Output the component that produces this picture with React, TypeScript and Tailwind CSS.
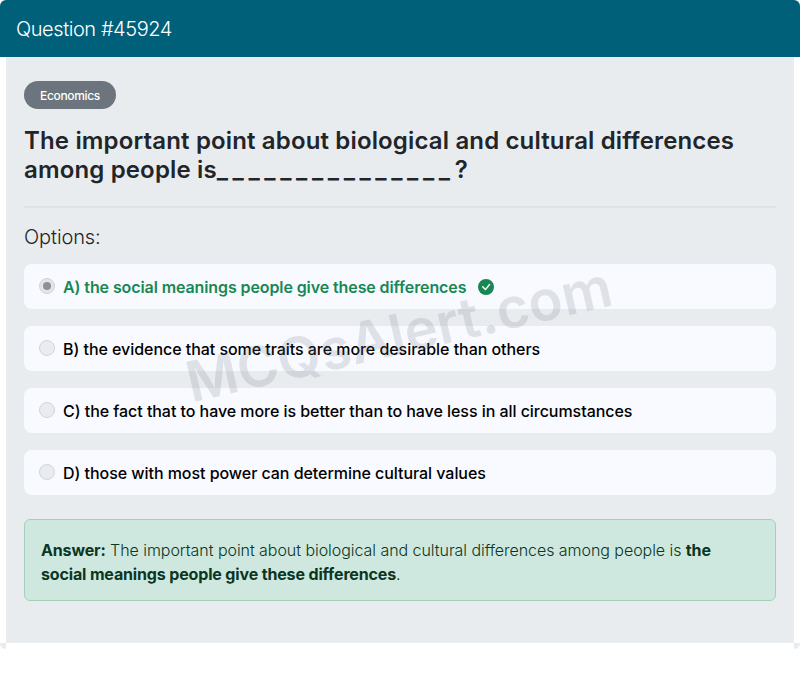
import React from 'react'

const options = [
  { label: 'A) the social meanings people give these differences', correct: true },
  { label: 'B) the evidence that some traits are more desirable than others', correct: false },
  { label: 'C) the fact that to have more is better than to have less in all circumstances', correct: false },
  { label: 'D) those with most power can determine cultural values', correct: false },
]

const App = () => {
  return (
    <div className="relative h-[674px] w-[800px] overflow-hidden bg-white font-['Inter',sans-serif]">
      <div className="rounded-t-[6px] bg-[#00607a] px-4 pt-[15px] pb-[13px] text-[20px] leading-[29px] font-light tracking-[-0.43px] text-white">
        Question #45924
      </div>

      <div className="mx-[6px] h-[586px] bg-[#e9ecef] px-[18px] pt-6">
        <span className="inline-block rounded-full bg-[#6c757d] px-4 pt-[7px] pb-[5px] text-xs leading-4 font-medium tracking-[-0.33px] text-white">
          Economics
        </span>
        <h2 className="mt-[17px] text-2xl leading-[29px] font-semibold tracking-[0.15px] text-[#212529]">
          The important point about biological and cultural differences among people is
          <span className="tracking-[4.6px]">_______________</span>?
        </h2>
        <hr className="mt-[22px] border-t-2 border-[#dee2e6]" />
        <p className="mt-[14px] text-xl leading-[30px] font-light tracking-[-0.1px] text-[#212529]">Options:</p>

        <div className="mt-[12px] flex flex-col gap-[17px]">
          {options.map((o) => (
            <div key={o.label} className="flex h-[45px] items-center rounded-lg bg-[#f8faff] pl-[15px]">
              <span
                className={
                  o.correct
                    ? 'mb-[2px] flex h-4 w-4 items-center justify-center rounded-full border border-[#ced4da] bg-[#e3e5e8]'
                    : 'mb-[2px] h-4 w-4 rounded-full border border-[#ced4da] bg-[#e9ecef]'
                }
              >
                {o.correct && <span className="h-2 w-2 rounded-full bg-[#8c9095]" />}
              </span>
              <span
                className={
                  o.correct
                    ? 'ml-2 text-base font-semibold tracking-[-0.1px] text-[#198754]'
                    : 'ml-2 text-base font-medium tracking-[-0.05px] text-black'
                }
              >
                {o.label}
              </span>
              {o.correct && (
                <svg viewBox="0 0 16 16" className="ml-3 h-4 w-4 fill-[#198754]">
                  <path d="M16 8A8 8 0 1 1 0 8a8 8 0 0 1 16 0zm-3.97-3.03a.75.75 0 0 0-1.08.02L7.47 9.42 5.38 7.33a.75.75 0 0 0-1.06 1.06L6.97 11.03a.75.75 0 0 0 1.08-.02l3.99-4.99a.75.75 0 0 0-.01-1.05z" />
                </svg>
              )}
            </div>
          ))}
        </div>

        <div className="mt-6 rounded-md border border-[#a3cfbb] bg-[#cfe8df] px-4 pt-[18px] pb-[14px] text-base leading-6 font-light tracking-[-0.05px] text-[#0a3622]">
          <strong className="font-bold tracking-[-0.15px]">Answer:</strong> The important point about biological and cultural differences among people is{' '}
          <strong className="font-bold tracking-[-0.15px]">the social meanings people give these differences</strong>.
        </div>
      </div>

      <div className="absolute top-[643px] left-0 h-[6px] w-[6px] rounded-bl-[6px] bg-[#e9ecef]" />
      <div className="absolute top-[643px] right-0 h-[6px] w-[6px] rounded-br-[6px] bg-[#e9ecef]" />

      <div className="absolute top-[355px] left-[187px] origin-left -rotate-[13deg] text-[56px] leading-none font-semibold tracking-[0.1px] whitespace-nowrap text-[#6c757d] opacity-[.18]">
        MCQsAlert.com
      </div>
    </div>
  )
}

export default App
